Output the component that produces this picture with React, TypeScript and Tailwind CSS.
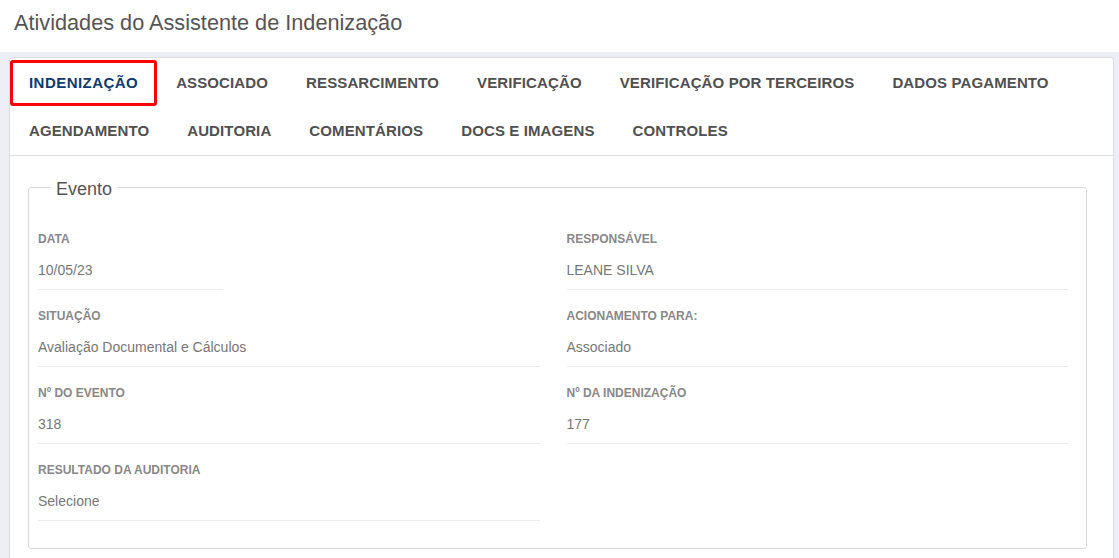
import React from "react";

const row1 = ["INDENIZAÇÃO", "ASSOCIADO", "RESSARCIMENTO", "VERIFICAÇÃO", "VERIFICAÇÃO POR TERCEIROS", "DADOS PAGAMENTO"];
const row2 = ["AGENDAMENTO", "AUDITORIA", "COMENTÁRIOS", "DOCS E IMAGENS", "CONTROLES"];

function Tab({ label, active }: { label: string; active?: boolean }) {
  return (
    <div
      className={
        "h-[46px] px-[16px] border-[3px] rounded-[3px] flex items-center text-[15px] font-bold whitespace-nowrap " +
        (active ? "border-[#ff0000] text-[#0d3b6e] tracking-[0.45px]" : "border-transparent text-[#505050] tracking-[0.12px]")
      }
    >
      {label}
    </div>
  );
}

function Field({ label, value, narrow }: { label: string; value?: string; narrow?: boolean }) {
  return (
    <div>
      <div className="text-[12px] leading-[16px] font-bold text-[#888888]">{label}</div>
      <div
        className={
          "mt-[13px] text-[14px] leading-[20px] pb-[9px] border-b border-[#ececec] text-[#777777] " +
          (narrow ? "w-[185px]" : "w-full")
        }
      >
        {value}
      </div>
    </div>
  );
}

export default function App() {
  return (
    <div className="min-h-screen bg-[#eeeef7] font-['Liberation_Sans',Arial,sans-serif]">
      <div className="bg-white h-[52px] pt-[10px] pl-[14px]">
        <div className="text-[21.7px] leading-[26px] text-[#555555]">Atividades do Assistente de Indenização</div>
      </div>
      <div className="pt-[5px] pl-[9px] pr-[5px]">
        <div className="bg-white border border-[#dddddd] rounded-[3px]">
          <div className="pt-[2px] pb-[1px] border-b border-[#dddddd] flex flex-col gap-[2px]">
            <div className="flex">
              {row1.map((t, i) => (
                <Tab key={t} label={t} active={i === 0} />
              ))}
            </div>
            <div className="flex">
              {row2.map((t) => (
                <Tab key={t} label={t} />
              ))}
            </div>
          </div>
          <div className="pt-[19px] pl-[18px] pr-[26px] pb-[30px]">
            <fieldset className="border border-[#d9d9d9] rounded-[3px] pl-[9px] pr-[18px] pb-[27px]">
              <legend className="ml-[13px] px-[5px] pt-[4px] text-[18px] leading-[20px] text-[#555555]">Evento</legend>
              <div className="pt-[32px] grid grid-cols-2 gap-x-[27px] gap-y-[18px]">
                <Field label="DATA" value="10/05/23" narrow />
                <Field label="RESPONSÁVEL" value="LEANE SILVA" />
                <Field label="SITUAÇÃO" value="Avaliação Documental e Cálculos" />
                <Field label="ACIONAMENTO PARA:" value="Associado" />
                <Field label="Nº DO EVENTO" value="318" />
                <Field label="Nº DA INDENIZAÇÃO" value="177" />
                <Field label="RESULTADO DA AUDITORIA" value="Selecione" />
                <div />
              </div>
            </fieldset>
          </div>
        </div>
      </div>
    </div>
  );
}
